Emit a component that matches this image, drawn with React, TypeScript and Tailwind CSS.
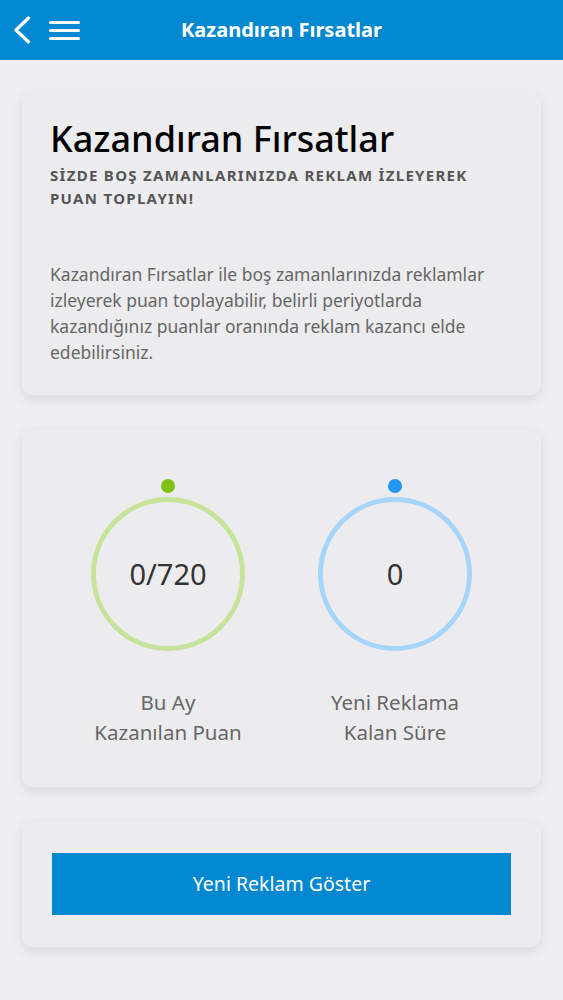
function Ring({ value, ring, dot }: { value: string; ring: string; dot: string }) {
  return (
    <div className="flex w-[154px] flex-col items-center">
      <span className={`h-[14px] w-[14px] rounded-full ${dot}`} />
      <div
        className={`mt-[4px] flex h-[154px] w-[154px] items-center justify-center rounded-full border-[5px] ${ring}`}
      >
        <span className="text-[29px] text-[#333]">{value}</span>
      </div>
    </div>
  );
}

export default function App() {
  return (
    <div
      className="min-h-[1000px] bg-[#efeff1]"
      style={{ fontFamily: "'Noto Sans', 'Open Sans', sans-serif" }}
    >
      <header className="relative flex h-[60px] items-center justify-center bg-[#0288d0] text-white">
        <div className="absolute top-0 left-0 flex h-[60px] items-center pl-[13px]">
          <svg width="18" height="28" viewBox="0 0 18 28" fill="none" stroke="white" strokeWidth="3.2" strokeLinecap="round" strokeLinejoin="round">
            <polyline points="15.5,2 3,14 15.5,26" />
          </svg>
          <div className="ml-[18px] flex flex-col gap-[5px]">
            <span className="block h-[3px] w-[31px] rounded bg-white" />
            <span className="block h-[3px] w-[31px] rounded bg-white" />
            <span className="block h-[3px] w-[31px] rounded bg-white" />
          </div>
        </div>
        <h1 className="text-[20px] font-bold">Kazandıran Fırsatlar</h1>
      </header>

      <main className="flex flex-col gap-[34px] px-[22px] pt-[32px]">
        <section className="rounded-[10px] bg-[#ececee] pt-[24px] pr-[40px] pb-[30px] pl-[28px] shadow-[0_4px_12px_rgba(0,0,0,0.10)]">
          <h2 className="text-[36px] leading-[46px] font-medium whitespace-nowrap text-black">Kazandıran Fırsatlar</h2>
          <p className="mt-[2px] text-[15px] leading-[23px] font-bold tracking-[1.3px] text-[#555]">
            SİZDE BOŞ ZAMANLARINIZDA REKLAM İZLEYEREK PUAN TOPLAYIN!
          </p>
          <p className="mt-[51px] text-[17.5px] leading-[26px] text-[#666]">
            Kazandıran Fırsatlar ile boş zamanlarınızda reklamlar izleyerek puan toplayabilir, belirli
            periyotlarda kazandığınız puanlar oranında reklam kazancı elde edebilirsiniz.
          </p>
        </section>

        <section className="rounded-[10px] bg-[#ececee] pt-[50px] pb-[40px] shadow-[0_4px_12px_rgba(0,0,0,0.10)]">
          <div className="flex justify-center gap-[73px]">
            <div className="flex flex-col items-center">
              <Ring value="0/720" ring="border-[#c5e49a]" dot="bg-[#7cc110]" />
              <p className="mt-[36px] text-center text-[20.5px] leading-[30px] whitespace-nowrap text-[#666]">
                Bu Ay
                <br />
                Kazanılan Puan
              </p>
            </div>
            <div className="flex flex-col items-center">
              <Ring value="0" ring="border-[#a6d5fb]" dot="bg-[#2196f3]" />
              <p className="mt-[36px] text-center text-[20.5px] leading-[30px] whitespace-nowrap text-[#666]">
                Yeni Reklama
                <br />
                Kalan Süre
              </p>
            </div>
          </div>
        </section>

        <section className="rounded-[10px] bg-[#ececee] px-[30px] py-[32px] shadow-[0_4px_12px_rgba(0,0,0,0.10)]">
          <button className="flex h-[62px] w-full items-center justify-center bg-[#0288d0] text-[19.5px] text-white">
            Yeni Reklam Göster
          </button>
        </section>
      </main>
    </div>
  );
}
